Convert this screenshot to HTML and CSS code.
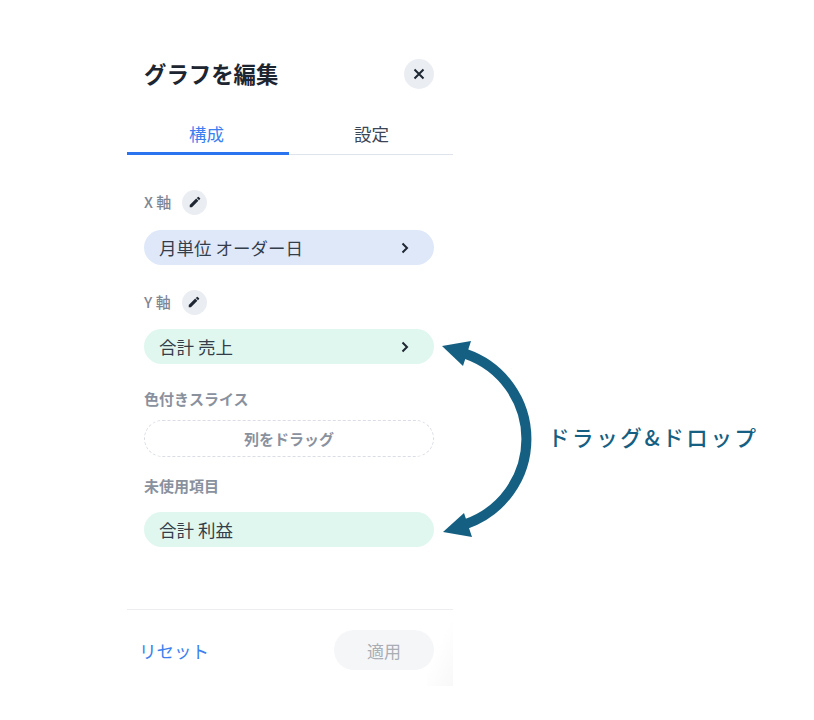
FILE: index.html
```html
<!DOCTYPE html>
<html lang="ja">
<head>
<meta charset="utf-8">
<title>グラフを編集</title>
<link rel="stylesheet" href="styles.css">
</head>
<body>
<div class="stage">
  <section class="panel">
    <header class="head">
      <h1 class="title">グラフを編集</h1>
      <button class="close" aria-label="閉じる">
        <svg width="12" height="12" viewBox="0 0 12 12"><path d="M1.5 1.5L10.5 10.5M10.5 1.5L1.5 10.5" stroke="#1f2733" stroke-width="2" fill="none"/></svg>
      </button>
    </header>
    <nav class="tabs">
      <div class="tab active">構成</div>
      <div class="tab">設定</div>
    </nav>
    <div class="body">
      <div class="label-row first">
        <span class="label">X 軸</span>
        <span class="edit"><svg width="14" height="14" viewBox="0 0 24 24"><path fill="#1f2733" d="M3 17.25V21h3.75L17.81 9.94l-3.75-3.75L3 17.25zM20.71 7.04a1 1 0 0 0 0-1.41l-2.34-2.34a1 1 0 0 0-1.41 0l-1.83 1.83 3.75 3.75 1.83-1.83z"/></svg></span>
      </div>
      <div class="pill blue"><span>月単位 オーダー日</span><svg class="chev" width="10" height="12" viewBox="0 0 10 12"><path d="M2.5 1.5L7 6L2.5 10.5" stroke="#1f2733" stroke-width="2" fill="none"/></svg></div>
      <div class="label-row second">
        <span class="label">Y 軸</span>
        <span class="edit"><svg width="14" height="14" viewBox="0 0 24 24"><path fill="#1f2733" d="M3 17.25V21h3.75L17.81 9.94l-3.75-3.75L3 17.25zM20.71 7.04a1 1 0 0 0 0-1.41l-2.34-2.34a1 1 0 0 0-1.41 0l-1.83 1.83 3.75 3.75 1.83-1.83z"/></svg></span>
      </div>
      <div class="pill green"><span>合計 売上</span><svg class="chev" width="10" height="12" viewBox="0 0 10 12"><path d="M2.5 1.5L7 6L2.5 10.5" stroke="#1f2733" stroke-width="2" fill="none"/></svg></div>
      <div class="label plain slice">色付きスライス</div>
      <div class="drop">列をドラッグ</div>
      <div class="label plain unused">未使用項目</div>
      <div class="pill green"><span>合計 利益</span></div>
    </div>
    <footer class="foot">
      <a class="reset">リセット</a>
      <button class="apply">適用</button>
    </footer>
  </section>
  <svg class="arrow" width="120" height="220" viewBox="430 330 120 220">
    <path d="M466 354A90 90 0 0 1 466 524" fill="none" stroke="#156082" stroke-width="10"/>
    <path d="M442 346L471 341L463 366Z" fill="#156082"/>
    <path d="M443 532L464 513L472 537Z" fill="#156082"/>
  </svg>
  <div class="caption">ドラッグ&amp;ドロップ</div>
</div>
</body>
</html>
```
FILE: styles.css
```css
* { box-sizing: border-box; }
html, body { margin: 0; padding: 0; background: #fff; }
body { font-family: "Noto Sans CJK JP", "Inter", sans-serif; color: #27303d; }
.stage { position: relative; width: 814px; height: 720px; overflow: hidden; padding: 42px 0 0 127px; }
.panel { width: 326px; height: 644px; display: flex; flex-direction: column; position: relative; }
.panel::after { content: ""; position: absolute; right: 0; bottom: 0; width: 26px; height: 64px; background: linear-gradient(115deg, rgba(248,248,249,0) 40%, #f8f8f9); pointer-events: none; }
.head { display: flex; justify-content: space-between; align-items: center; height: 64px; padding: 0 19px 0 17px; }
.title { margin: 0 0 2px; font-size: 22.4px; line-height: 62px; font-weight: 700; color: #1d2530; }
.close { width: 30px; height: 30px; border: 0; border-radius: 50%; background: #eaedf2; padding: 0; display: flex; align-items: center; justify-content: center; }
.tabs { display: flex; height: 49px; border-bottom: 1px solid #dfe3ec; }
.tab { flex: 0 0 162px; text-align: center; font-size: 17.5px; line-height: 26px; padding-top: 15px; height: 49px; color: #3c4553; }
.tab.active { color: #3b7ff0; border-bottom: 3px solid #2b74ef; padding-right: 3px; }
.tab + .tab { flex: 1; padding-left: 1px; }
.body { flex: 1; padding: 0 19px 0 17px; }
.label-row { display: flex; align-items: center; height: 26px; gap: 11px; }
.label-row.first { margin-top: 34px; }
.label-row.second { margin-top: 24px; }
.label { font-size: 15px; line-height: 20px; font-weight: 500; color: #7f8795; }
.label.plain { font-weight: 700; color: #8a919e; }
.edit { width: 25px; height: 25px; border-radius: 50%; background: #eaedf2; display: flex; align-items: center; justify-content: center; }
.pill { height: 35px; margin-top: 15px; border-radius: 18px; padding: 0 24px 0 15px; display: flex; align-items: center; justify-content: space-between; font-size: 17.5px; color: #343d4a; }
.label-row.second + .pill { margin-top: 14px; }
.pill.blue { background: #dfe8f9; }
.pill.green { background: #e0f7ef; }
.chev { display: block; }
.plain.slice { margin-top: 25px; }
.drop { margin-top: 11px; height: 37px; border: 1px dashed #dadde5; border-radius: 19px; text-align: center; font-size: 15px; line-height: 35px; font-weight: 700; color: #8a919e; }
.plain.unused { margin-top: 19px; }
.unused + .pill { margin-top: 16px; }
.foot { height: 77px; border-top: 1px solid #ecedf0; display: flex; justify-content: space-between; align-items: center; padding: 4px 19px 0 12px; }
.reset { font-size: 17.5px; color: #3b7ff0; }
.apply { width: 100px; height: 40px; border: 0; border-radius: 20px; background: #f5f6f8; font-family: inherit; font-size: 17px; color: #a9adb4; padding: 0; }
.arrow { position: absolute; left: 430px; top: 330px; }
.caption { position: absolute; left: 548px; top: 421px; font-size: 21.5px; line-height: 32px; font-weight: 500; color: #156082; letter-spacing: 2.6px; white-space: nowrap; }
```
